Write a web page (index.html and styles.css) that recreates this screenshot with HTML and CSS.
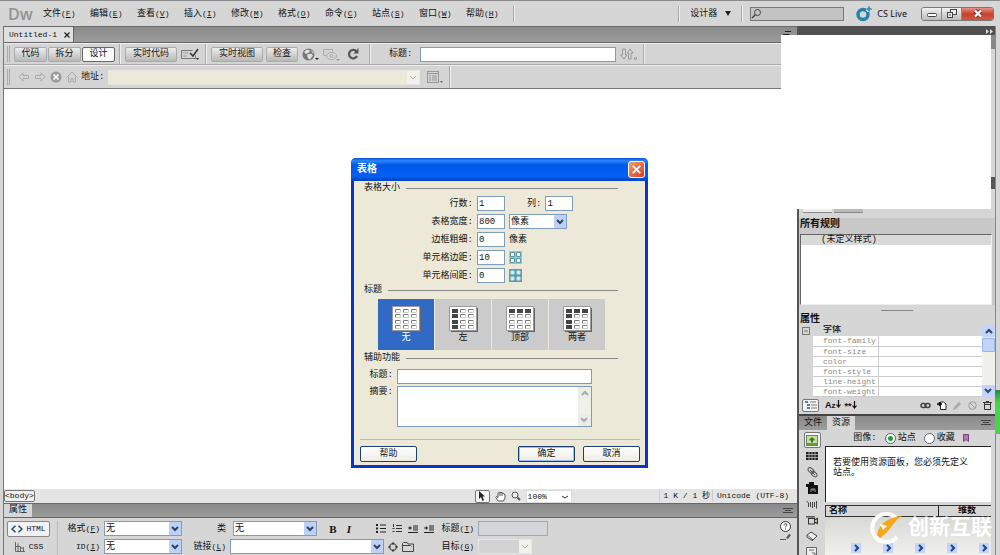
FILE: index.html
```html
<!DOCTYPE html>
<html lang="zh-CN">
<head>
  <meta charset="UTF-8">
  <meta name="viewport" content="width=device-width, initial-scale=1.0">
  <title>Untitled-1</title>
  <link rel="stylesheet" href="styles.css">
</head>

<body>
<header class="app-bar">
  <div class="logo">Dw</div>
  <nav class="menu">
    <a href="#">文件<span class="key">(<u>F</u>)</span></a>
    <a href="#">编辑<span class="key">(<u>E</u>)</span></a>
    <a href="#">查看<span class="key">(<u>V</u>)</span></a>
    <a href="#">插入<span class="key">(<u>I</u>)</span></a>
    <a href="#">修改<span class="key">(<u>M</u>)</span></a>
    <a href="#">格式<span class="key">(<u>O</u>)</span></a>
    <a href="#">命令<span class="key">(<u>C</u>)</span></a>
    <a href="#">站点<span class="key">(<u>S</u>)</span></a>
    <a href="#">窗口<span class="key">(<u>W</u>)</span></a>
    <a href="#">帮助<span class="key">(<u>H</u>)</span></a>
  </nav>
  <i class="sep menu-end"></i>
  <div class="app-right">
    <i class="sep"></i>
    <button class="workspace">设计器 <svg width="6" height="5" viewBox="0 0 6 5"><path d="M0 0h6L3 5z" fill="#222"/></svg></button>
    <i class="sep"></i>
    <label class="search">
      <svg width="11" height="11" viewBox="0 0 11 11" fill="none" stroke="#444"><circle cx="6.5" cy="4.5" r="3"/><path d="M4.3 6.8L1 10" stroke-width="1.5"/></svg>
      <input type="text" aria-label="搜索">
    </label>
    <button class="cs-live"><svg width="16" height="16" viewBox="0 0 16 16"><circle cx="7" cy="8.500" r="5" fill="none" stroke="#2583a8" stroke-width="3.500"/><path d="M13 0v6M10 3h6" stroke="#d6d6d6" stroke-width="4"/><path d="M13 .5v5M10.500 3h5" stroke="#3b94b8" stroke-width="1.800"/></svg>CS Live</button>
    <div class="win-buttons">
      <button aria-label="最小化"><svg width="10" height="8" viewBox="0 0 10 8"><rect x=".5" y="3.500" width="9" height="3" rx="1" fill="#fff" stroke="#444"/></svg></button>
      <button aria-label="还原"><svg width="10" height="9" viewBox="0 0 10 9" fill="#eee" stroke="#444"><rect x="3.500" y=".5" width="6" height="5"/><rect x=".5" y="3.500" width="5" height="5"/><path d="M2 6h2"/></svg></button>
      <button class="win-close" aria-label="关闭"><svg width="10" height="9" viewBox="0 0 10 9"><path d="M2 1.500l6 6M8 1.500l-6 6" stroke="#733" stroke-width="4"/><path d="M2 1.500l6 6M8 1.500l-6 6" stroke="#fff" stroke-width="2.200"/></svg></button>
    </div>
  </div>
</header>

<main class="workspace-row">
  <section class="document">
    <div class="doc-tabs">
      <div class="doc-tab"><span class="en">Untitled-1</span>
        <button aria-label="关闭文档"><svg width="6" height="6" viewBox="0 0 6 6"><path d="M.5.5l5 5M5.500.5l-5 5" stroke="#222" stroke-width="1.200"/></svg></button>
      </div>
      <svg class="restore" width="8" height="6" viewBox="0 0 8 6" fill="#bbb" stroke="#222"><path d="M2 .5h6M0 3.500h6v2H0z"/></svg>
    </div>

    <div class="toolbar">
      <i class="grip"></i>
      <div class="view-modes">
        <button class="tool">代码</button>
        <button class="tool">拆分</button>
        <button class="tool active">设计</button>
      </div>
      <i class="sep"></i>
      <button class="tool">实时代码</button>
      <button class="icon" aria-label="检查浏览器"><svg width="18" height="12" viewBox="0 0 18 12" fill="none" stroke="#555"><path d="M.5 2.500h11M.5 2.500v8h14v-3" stroke="#777"/><path d="M2 5h5M2 8h4" stroke="#999"/><path d="M9 5l3 3 5-7" stroke="#333" stroke-width="1.500"/><path d="M15 10h3l-1.500 2z" fill="#222" stroke="none"/></svg></button>
      <i class="sep"></i>
      <button class="tool">实时视图</button>
      <button class="tool inspect">检查</button>
      <button class="icon" aria-label="预览"><svg width="17" height="13" viewBox="0 0 17 13"><circle cx="6.500" cy="6.500" r="6" fill="#777"/><path d="M2 4l3-2.500 3 1-1 2-3 1.500zM5 6.500l4-1 2 2-3 4-2-1z" fill="#ddd"/><path d="M9 2l2 1 1 3-2-1z" fill="#bbb"/><path d="M13 10h4l-2 2z" fill="#222"/></svg></button>
      <button class="icon" aria-label="可视化助理" disabled><svg width="17" height="13" viewBox="0 0 17 13" fill="none" stroke="#aaa"><path d="M.5 1.500h9v2M.5 1.500v6h3"/><ellipse cx="8.500" cy="8" rx="5" ry="3.500"/><circle cx="8.500" cy="8" r="1.500"/><path d="M13 11h4l-2 2z" fill="#999" stroke="none"/></svg></button>
      <button class="icon refresh" aria-label="刷新"><svg width="12" height="12" viewBox="0 0 12 12"><path d="M9.500 3.500A4.200 4.200 0 1 0 10 8" fill="none" stroke="#555" stroke-width="2.200"/><path d="M11.500 0v5.500H6.500z" fill="#555"/></svg></button>
      <i class="sep"></i>
      <label class="doc-title">标题:<input type="text"></label>
      <button class="icon" aria-label="文件管理" disabled><svg width="17" height="12" viewBox="0 0 17 12" fill="none" stroke="#999"><path d="M2.500 1v6H.5L4 11l3-4H5.500V1zM8.500 11V5H7l3-4 3 4h-2v6zM14 10h3l-1.500 2z"/></svg></button>
      <i class="sep"></i>
    </div>

    <div class="toolbar address">
      <i class="grip"></i>
      <button class="icon" aria-label="后退" disabled><svg width="12" height="10" viewBox="0 0 12 10" fill="none" stroke="#aaa"><path d="M5 .8L.8 5 5 9.200V6.500h5.500v-3H5z"/></svg></button>
      <button class="icon" aria-label="前进" disabled><svg width="12" height="10" viewBox="0 0 12 10" fill="none" stroke="#aaa"><path d="M7 .8L11.200 5 7 9.200V6.500H1.500v-3H7z"/></svg></button>
      <button class="icon" aria-label="停止" disabled><svg width="12" height="12" viewBox="0 0 12 12"><circle cx="6" cy="6" r="5.500" fill="#999"/><path d="M3.500 3.500l5 5M8.500 3.500l-5 5" stroke="#eee" stroke-width="1.800"/></svg></button>
      <button class="icon" aria-label="主页" disabled><svg width="12" height="12" viewBox="0 0 12 12" fill="none" stroke="#aaa"><path d="M.8 6.500L6 1l5.200 5.500M2.500 5.500v5.500h2.500V7.500h2V11h2.500V5.500"/></svg></button>
      <label for="address">地址:</label>
      <select id="address" class="off" disabled><option></option></select>
      <button class="icon" aria-label="选项" disabled><svg width="16" height="13" viewBox="0 0 16 13" fill="none" stroke="#999"><rect x=".5" y=".5" width="11" height="11"/><path d="M.5 2.500h11M2 5h2M2 7h2M2 9h2M5 5h5M5 7h5M5 9h5"/><path d="M13 10h3l-1.500 2z" fill="#666" stroke="none"/></svg></button>
      <i class="sep"></i>
    </div>

    <div class="canvas"></div>

    <div class="status-bar">
      <button class="tag en">&lt;body&gt;</button>
      <div class="status-tools">
        <button class="icon picked" aria-label="选取"><svg width="8" height="10" viewBox="0 0 8 10"><path d="M1 0v8l2-2 1.500 4 1.500-.7L4.500 5.500H7z" fill="#222"/></svg></button>
        <button class="icon" aria-label="手形"><svg width="11" height="11" viewBox="0 0 11 11" fill="#fff" stroke="#555"><path d="M3 10L.8 6.500l.7-1L3 6.500V2l1-.5L5 2l1-1 1 1 1 0 .5 1 1.500.5V7L8.500 10z"/><path d="M5 2v3M7 2v3"/></svg></button>
        <button class="icon" aria-label="缩放"><svg width="10" height="10" viewBox="0 0 10 10" fill="#eee" stroke="#555"><circle cx="4" cy="4" r="3"/><path d="M6.500 6.500L9 9" stroke-width="2"/></svg></button>
        <select class="zoom" aria-label="缩放比率"><option>100%</option></select>
      </div>
      <div class="status-info en"><span>1 K / 1 秒</span><span>Unicode (UTF-8)</span></div>
    </div>

    <section class="properties">
      <div class="prop-tabs"><span class="panel-tab">属性</span>
        <button class="panel-menu" aria-label="面板菜单"></button>
      </div>
      <div class="prop-body">
        <div class="prop-mode">
          <button class="mode on en"><svg width="12" height="8" viewBox="0 0 12 8" fill="none" stroke="#246" stroke-width="1.500"><path d="M4.500.8L1 4l3.500 3.200M7.500.8L11 4 7.500 7.200"/></svg>HTML</button>
          <button class="mode en"><svg width="12" height="10" viewBox="0 0 12 10" fill="none" stroke="#666"><path d="M1.500 0v9.500H11M1.500 4.500h5v5M4 1.500v8M9.500 5.500v4M6.500 6h3"/></svg>CSS</button>
        </div>
        <div class="prop-grid">
          <label for="format">格式<span class="key">(<u>F</u>)</span></label>
          <select id="format"><option>无</option></select>
          <label for="class">类</label>
          <div class="cell">
            <select id="class" class="class-select"><option>无</option></select>
            <button class="icon bold">B</button>
            <button class="icon italic">I</button>
            <div class="list-buttons">
              <button class="icon" aria-label="项目列表"><svg width="10" height="9" viewBox="0 0 10 9" stroke="#222"><path d="M0 1h2M0 4.500h2M0 8h2" stroke-width="2"/><path d="M4 1h6M4 4.500h6M4 8h6"/></svg></button>
              <button class="icon" aria-label="编号列表"><svg width="10" height="9" viewBox="0 0 10 9" stroke="#333"><path d="M1.500 0v3M.5 4.500h2M.5 7.500h2M4 1.500h6M4 4.500h6M4 7.500h6"/></svg></button>
              <button class="icon" aria-label="缩出"><svg width="10" height="8" viewBox="0 0 10 8" stroke="#222"><path d="M0 7.500h10M5 1h5M5 3h5M5 5h5M1 3h3"/><path d="M0 3l2.500-2v4z" fill="#222" stroke="none"/></svg></button>
              <button class="icon" aria-label="缩进"><svg width="10" height="8" viewBox="0 0 10 8" stroke="#222"><path d="M0 7.500h10M5 1h5M5 3h5M5 5h5M0 3h3"/><path d="M4 3L2 1v4z" fill="#222" stroke="none"/></svg></button>
            </div>
          </div>
          <label for="link-title">标题<span class="key">(<u>T</u>)</span></label>
          <input id="link-title" type="text" disabled>

          <label for="ident"><span class="key">ID(<u>I</u>)</span></label>
          <select id="ident"><option>无</option></select>
          <label for="link">链接<span class="key">(<u>L</u>)</span></label>
          <div class="cell">
            <select id="link" class="link-select"><option></option></select>
            <button class="icon" aria-label="指向文件"><svg width="10" height="10" viewBox="0 0 10 10" fill="none" stroke="#333"><circle cx="5" cy="5" r="3.500"/><path d="M5 0v3M5 7v3M0 5h3M7 5h3"/></svg></button>
            <button class="icon" aria-label="浏览文件"><svg width="12" height="10" viewBox="0 0 12 10" fill="none" stroke="#444"><path d="M.5 9.500v-8l1-1H5l1 1.500h5.500v7.500zM.5 3.500h8l1 1"/></svg></button>
          </div>
          <label for="target">目标<span class="key">(<u>G</u>)</span></label>
          <select id="target" class="off target-select" disabled><option></option></select>
        </div>
        <div class="prop-help">
          <button class="icon" aria-label="帮助"><svg width="11" height="11" viewBox="0 0 11 11" fill="#fff" stroke="#333"><circle cx="5.500" cy="5.500" r="5"/><path d="M4 4.300c0-2 3-2 3-.3 0 1-1.500 1-1.500 2.300M5.500 7.500v1"/></svg></button>
          <button class="icon" aria-label="快速标签编辑器"><svg width="11" height="6" viewBox="0 0 11 6"><path d="M0 5.500h6" stroke="#555"/><path d="M6 4l3-4 2 1-3 4z" fill="#555"/></svg></button>
        </div>
      </div>
    </section>
  </section>

  <aside class="dock">
    <div class="dock-top"><svg width="7" height="5" viewBox="0 0 7 5" fill="#ddd"><path d="M0 0l3 2.500L0 5zM4 0l3 2.500L4 5z"/></svg></div>
    <div class="dock-scroll"></div>
    <div class="css-modes"><i></i><i></i></div>
    <section class="rules">
      <h2>所有规则</h2>
      <div class="rule-list"><p>(未定义样式)</p></div>
    </section>
    <div class="splitter"></div>
    <section class="css-props">
      <h2>属性</h2>
      <div class="css-box">
        <table>
          <colgroup><col class="col-twisty"><col class="col-name"><col></colgroup>
          <thead><tr><th class="twisty"><svg width="8" height="8" viewBox="0 0 8 8" fill="none" stroke="#777"><rect x=".5" y=".5" width="7" height="7"/><path d="M2 4h4"/></svg></th><th colspan="2">字体</th></tr></thead>
          <tbody>
            <tr><td></td><td>font-family</td><td></td></tr>
            <tr><td></td><td>font-size</td><td></td></tr>
            <tr><td></td><td>color</td><td></td></tr>
            <tr><td></td><td>font-style</td><td></td></tr>
            <tr><td></td><td>line-height</td><td></td></tr>
            <tr><td></td><td>font-weight</td><td></td></tr>
          </tbody>
        </table>
        <div class="scrollbar"><i class="up"></i><i class="thumb"></i><i class="down"></i></div>
      </div>
      <div class="css-tools">
        <button class="icon picked" aria-label="类别视图"><svg width="12" height="9" viewBox="0 0 12 9"><path d="M0 1h3M2 4h3M2 7h3" stroke="#357" stroke-width="1.500"/><path d="M5 1h6M6 4h6M6 7h6" stroke="#777"/></svg></button>
        <button class="icon az">A<small>z</small><svg width="5" height="8" viewBox="0 0 5 8"><path d="M2.500 0v6M.5 4.500l2 2.500 2-2.500" fill="none" stroke="#111" stroke-width="1.200"/></svg></button>
        <button class="icon az">**<svg width="5" height="8" viewBox="0 0 5 8"><path d="M2.500 0v6M.5 4.500l2 2.500 2-2.500" fill="none" stroke="#111" stroke-width="1.200"/></svg></button>
        <span class="push"></span>
        <button class="icon" aria-label="附加样式表"><svg width="11" height="7" viewBox="0 0 11 7" fill="none" stroke="#444" stroke-width="1.500"><rect x="1" y="1.500" width="5" height="4" rx="2"/><rect x="5" y="1.500" width="5" height="4" rx="2"/></svg></button>
        <button class="icon" aria-label="新建规则"><svg width="10" height="9" viewBox="0 0 10 9"><path d="M3.500 1h3L9 3v5.500H3.500z" fill="#fff" stroke="#222"/><path d="M0 3h5M2.500 1v4" stroke="#111" stroke-width="1.500"/></svg></button>
        <button class="icon" aria-label="编辑规则" disabled><svg width="9" height="9" viewBox="0 0 9 9"><path d="M0 9l1-3 5-5 2 2-5 5z" fill="#aaa"/></svg></button>
        <button class="icon" aria-label="禁用" disabled><svg width="9" height="9" viewBox="0 0 9 9" fill="none" stroke="#999"><circle cx="4.500" cy="4.500" r="3.800"/><path d="M2 2l5 5"/></svg></button>
        <button class="icon" aria-label="删除"><svg width="9" height="9" viewBox="0 0 9 9" fill="none" stroke="#333"><path d="M0 1.500h9M3 .5h3M1.500 2v6.500h6V2M1.500 3.500h6"/></svg></button>
      </div>
    </section>

    <section class="assets">
      <div class="asset-tabs"><span>文件</span><span class="panel-tab">资源</span>
        <button class="panel-menu" aria-label="面板菜单"></button>
      </div>
      <div class="asset-body">
        <div class="asset-kinds">
          <button class="icon picked" aria-label="图像"><svg width="12" height="11" viewBox="0 0 12 11"><rect x=".5" y=".5" width="11" height="10" fill="#c5dfa0" stroke="#686"/><path d="M1 8h10v2H1z" fill="#6a9a3c"/><path d="M6 2.500v5M3.500 4.500h5" stroke="#3c7a1c" stroke-width="2"/></svg></button>
          <button class="icon" aria-label="颜色"><svg width="12" height="8" viewBox="0 0 12 8"><path d="M0 0h12v8H0z" fill="#222"/><path d="M3 0v8M6 0v8M9 0v8M0 2.500h12M0 5.500h12" stroke="#ccc" stroke-width=".7"/></svg></button>
          <button class="icon" aria-label="URL"><svg width="11" height="11" viewBox="0 0 11 11" fill="none" stroke="#555"><ellipse cx="4" cy="3.500" rx="3.500" ry="2" transform="rotate(40 4 3.500)"/><ellipse cx="7" cy="7" rx="3.500" ry="2" transform="rotate(40 7 7)"/><path d="M3 3l5 5"/></svg></button>
          <button class="icon" aria-label="SWF"><svg width="12" height="12" viewBox="0 0 12 12"><path d="M0 2h3V0h5v3h4v9H2V5H0z" fill="#111"/><path d="M5 10V7h4v3M7 7v2" stroke="#999" fill="none"/></svg></button>
          <button class="icon" aria-label="Shockwave"><svg width="12" height="9" viewBox="0 0 12 9" fill="none" stroke="#444"><path d="M.5 1l2 2v4M4.500 2v5M6.500 2v6M8.500 2v5M10.500 1v7.500"/></svg></button>
          <button class="icon" aria-label="影片"><svg width="12" height="9" viewBox="0 0 12 9" fill="none" stroke="#333"><rect x="2.500" y="2.500" width="6" height="5.500"/><path d="M0 .8h9M8.500 4l3-1.500v5l-3-1.500" stroke-width="1.300"/></svg></button>
          <button class="icon" aria-label="脚本"><svg width="12" height="10" viewBox="0 0 12 10" fill="#eee" stroke="#444"><path d="M1 4l4-3 6 4-4 4z"/><path d="M1 4v2l6 4"/></svg></button>
          <button class="icon" aria-label="模板"><svg width="12" height="10" viewBox="0 0 12 10" fill="#eee" stroke="#666"><path d="M.5.5h10v9H.5zM3 3h5M6 6h3v3"/></svg></button>
        </div>
        <div class="asset-main">
          <div class="asset-filter">
            <span>图像:</span>
            <label><input type="radio" name="scope" checked>站点</label>
            <label><input type="radio" name="scope">收藏</label>
            <svg width="6" height="8" viewBox="0 0 6 8"><path d="M.5.5h5v7L3 5.500.5 7.500z" fill="#b7b" stroke="#747"/></svg>
          </div>
          <div class="asset-preview">若要使用资源面板，您必须先定义<br>站点。</div>
          <div class="asset-head"><b>名称</b><b>维数</b></div>
          <div class="asset-list"><i></i><i></i><i></i><i></i><i></i></div>
        </div>
      </div>
    </section>
  </aside>
</main>

<div class="blank-cover"></div>
<div class="green-tab"></div>

<form class="dialog" role="dialog" aria-labelledby="dialog-title">
  <div class="dialog-title"><b id="dialog-title">表格</b>
    <button type="button" aria-label="关闭"><svg width="9" height="9" viewBox="0 0 9 9"><path d="M.8.8l7.400 7.400M8.200.8L.8 8.200" stroke="#fff" stroke-width="1.700"/></svg></button>
  </div>
  <div class="dialog-body">
    <div class="legend">表格大小</div>
    <div class="size-rows">
      <label for="rows">行数:</label>
      <div class="cell"><input id="rows" type="text" value="1"><label class="cols-label" for="cols">列:</label><input id="cols" type="text" value="1"></div>
      <label for="width">表格宽度:</label>
      <div class="cell"><input id="width" type="text" value="800"><select aria-label="宽度单位"><option>像素</option></select></div>
      <label for="border">边框粗细:</label>
      <div class="cell"><input id="border" type="text" value="0">像素</div>
      <label for="padding">单元格边距:</label>
      <div class="cell"><input id="padding" type="text" value="10"><svg width="13" height="13" viewBox="0 0 13 13"><path d="M0 0h13v13H0z" fill="#9cc6ce"/><path d="M1.500 1.500h4v4h-4zM7.500 1.500h4v4h-4zM1.500 7.500h4v4h-4zM7.500 7.500h4v4h-4z" fill="#eef8fa" stroke="#5b9aa9"/></svg></div>
      <label for="spacing">单元格间距:</label>
      <div class="cell"><input id="spacing" type="text" value="0"><svg width="13" height="13" viewBox="0 0 13 13"><path d="M0 0h13v13H0z" fill="#5f9dad"/><path d="M2 2h3v3H2zM8 2h3v3H8zM2 8h3v3H2zM8 8h3v3H8z" fill="#e2f3f6" stroke="#c2e0e6"/></svg></div>
    </div>

    <div class="legend">标题</div>
    <div class="headers">
      <button type="button" class="on"><svg width="29" height="26" viewBox="0 0 29 26"><use href="#grid"/></svg>无</button>
      <button type="button"><svg width="29" height="26" viewBox="0 0 29 26"><use href="#grid"/><use href="#left"/></svg>左</button>
      <button type="button"><svg width="29" height="26" viewBox="0 0 29 26"><use href="#grid"/><use href="#top"/></svg>顶部</button>
      <button type="button"><svg width="29" height="26" viewBox="0 0 29 26"><use href="#grid"/><use href="#left"/><use href="#top"/></svg>两者</button>
    </div>

    <div class="legend">辅助功能</div>
    <div class="access">
      <label for="caption">标题:</label>
      <input id="caption" type="text">
      <label for="summary">摘要:</label>
      <div class="summary"><textarea id="summary"></textarea><div class="scrollbar off"><i class="up"></i><i class="down"></i></div></div>
    </div>

    <div class="dialog-buttons">
      <button type="button">帮助</button>
      <span class="push"></span>
      <button type="submit" class="default">确定</button>
      <button type="button">取消</button>
    </div>
  </div>
</form>

<div class="watermark">
  <svg width="38" height="34" viewBox="0 0 38 34" fill="none">
    <path d="M30 8A14 14 0 1 0 30 26" stroke="#fff" stroke-width="4"/>
    <path d="M10 24C12 12 22 6 35 5C26 10 24 20 13 27z" fill="#f5a81c"/>
    <path d="M13 13l7 2-4 4z" fill="#fff"/>
  </svg>
  <b>创新互联</b>
</div>

<svg class="defs" width="0" height="0">
  <defs>
    <g id="grid">
      <path d="M2 2h27v24H2z" fill="#666"/>
      <path d="M.5.5h27v24H.5z" fill="#fff" stroke="#999"/>
      <path d="M3.500 6.500v-3h5M11.500 6.500v-3h5M19.500 6.500v-3h5M3.500 11.500v-3h5M11.500 11.500v-3h5M19.500 11.500v-3h5M3.500 17.500v-3h5M11.500 17.500v-3h5M19.500 17.500v-3h5M3.500 22.500v-3h5M11.500 22.500v-3h5M19.500 22.500v-3h5" fill="none" stroke="#777"/>
      <path d="M3.500 6.500h5v-3M11.500 6.500h5v-3M19.500 6.500h5v-3M3.500 11.500h5v-3M11.500 11.500h5v-3M19.500 11.500h5v-3M3.500 17.500h5v-3M11.500 17.500h5v-3M19.500 17.500h5v-3M3.500 22.500h5v-3M11.500 22.500h5v-3M19.500 22.500h5v-3" fill="none" stroke="#ccc"/>
    </g>
    <path id="left" d="M3 3h6v4H3zM3 8h6v4H3zM3 14h6v4H3zM3 19h6v4H3z" fill="#444"/>
    <path id="top" d="M3 3h6v4H3zM11 3h6v4h-6zM19 3h6v4h-6z" fill="#444"/>
  </defs>
</svg>
</body>
</html>
```

FILE: styles.css
```css
* {
    box-sizing: border-box;
    margin: 0;
    padding: 0;
}

body {
    display: flex;
    flex-direction: column;
    height: 100vh;
    overflow: hidden;
    background: #d6d6d6;
    border-top: 1px solid #8a8a8a;
    color: #111;
    font-family: "Liberation Mono", "Noto Sans CJK SC", monospace;
    font-size: 9px;
    line-height: 12px;
}

button, input, select, textarea {
    font: inherit;
    color: inherit;
}

button {
    display: inline-flex;
    align-items: center;
    justify-content: center;
    border: 0;
    background: none;
    white-space: nowrap;
}

a {
    color: inherit;
    text-decoration: none;
}

svg {
    display: block;
    flex: none;
}

label {
    white-space: nowrap;
}

input[type=text], select, textarea {
    min-width: 0;
    height: 15px;
    border: 1px solid #7f9db9;
    border-radius: 0;
    background: #fff;
    outline: none;
}

select {
    appearance: none;
    padding: 0 14px 0 1px;
    background: #fff url("data:image/svg+xml,%3Csvg xmlns='http://www.w3.org/2000/svg' width='12' height='13'%3E%3Crect width='12' height='13' rx='1' fill='%23bdd0f8'/%3E%3Cpath d='M3 5l3 3 3-3' fill='none' stroke='%23345' stroke-width='2'/%3E%3C/svg%3E") no-repeat right center;
}

select.off {
    border-color: #e8e8e2;
    background: #ece9d8 url("data:image/svg+xml,%3Csvg xmlns='http://www.w3.org/2000/svg' width='12' height='13'%3E%3Crect width='12' height='13' fill='%23f2f1ea'/%3E%3Cpath d='M3 5l3 3 3-3' fill='none' stroke='%23aaa'/%3E%3C/svg%3E") no-repeat right center;
    opacity: 1;
}

.key, .en {
    font-size: 8px;
}

.cell {
    display: flex;
    align-items: center;
}

.push {
    flex: 1;
}

.sep {
    flex: none;
    width: 2px;
    align-self: stretch;
    border-left: 1px solid #aaa;
    border-right: 1px solid #eee;
}

.picked {
    border: 1px solid #777;
    border-radius: 2px;
    background: #f4f4f4;
}

/* application bar */
.app-bar {
    display: flex;
    align-items: center;
    height: 25px;
    padding: 0 6px 0 8px;
}

.app-bar .sep {
    height: 16px;
    align-self: center;
}

.logo {
    width: 35px;
    color: #929292;
    font: 600 16px/24px "Open Sans", sans-serif;
}

.menu {
    display: flex;
}

.menu a {
    width: 47px;
    white-space: nowrap;
}

.app-bar .menu-end {
    margin-right: 4px;
}

.app-right {
    display: flex;
    align-items: center;
    gap: 7px;
    margin-left: auto;
}

.workspace {
    gap: 8px;
    padding: 0 3px;
}

.search {
    display: flex;
    align-items: center;
    width: 94px;
    height: 14px;
    border: 1px solid #777;
    background: #c3c3c3;
}

.search input[type=text] {
    width: 80px;
    height: 12px;
    border: 0;
    background: none;
}

.cs-live {
    gap: 5px;
    margin: 0 7px 0 5px;
    font: 9px/12px "Noto Sans", sans-serif;
}

.win-buttons {
    display: flex;
    border: 1px solid #777;
    border-radius: 3px;
    overflow: hidden;
}

.win-buttons button {
    width: 20px;
    height: 12px;
    border-right: 1px solid #888;
    background: linear-gradient(#f2f2f2, #bcbcbc);
}

.win-buttons .win-close {
    width: 31px;
    border: 0;
    background: linear-gradient(#e79282, #c9402c 50%, #d25843);
}

/* document */
.workspace-row {
    display: flex;
    flex: 1;
    min-height: 0;
}

.document {
    display: flex;
    flex-direction: column;
    flex: 1;
    min-width: 0;
    border-left: 1px solid #777;
    margin-left: 3px;
}

.doc-tabs, .prop-tabs, .asset-tabs {
    display: flex;
    background: linear-gradient(#8a8a8a, #9c9c9c);
    border-top: 1px solid #6a6a6a;
    border-bottom: 1px solid #666;
}

.doc-tabs {
    height: 17px;
    padding-right: 6px;
}

.doc-tab {
    display: flex;
    align-items: center;
    gap: 7px;
    width: 70px;
    padding-left: 5px;
    background: #e0e0e0;
    border-right: 1px solid #666;
}

.restore {
    margin: 4px 0 0 auto;
}

.toolbar {
    display: flex;
    align-items: center;
    height: 22px;
    padding-left: 3px;
    border-top: 1px solid #eee;
    border-bottom: 1px solid #aaa;
    background: #d4d4d4;
}

.toolbar .icon {
    margin-left: 4px;
}

.toolbar .refresh {
    margin: 0 4px 0 7px;
}

.grip {
    width: 3px;
    height: 16px;
    border: 1px solid #aaa;
    border-width: 0 1px;
    margin-right: 4px;
}

.tool {
    height: 15px;
    padding: 0 6px;
    border: 1px solid #aaa;
    border-radius: 2px;
    background: linear-gradient(#ececec, #b8b8b8);
}

.view-modes {
    display: flex;
    gap: 1px;
    margin-right: 4px;
}

.view-modes .tool {
    width: 33px;
}

.tool.active {
    border-color: #666;
    background: #fafafa;
}

.toolbar > .sep + .tool {
    width: 52px;
    margin-left: 4px;
}

.toolbar .icon + .sep {
    margin-left: 6px;
}

.inspect {
    width: 32px;
    margin-left: 3px;
}

.doc-title {
    display: flex;
    align-items: center;
    gap: 8px;
    margin-left: 18px;
}

.doc-title input[type=text] {
    width: 196px;
}

.address {
    height: 24px;
    border-bottom: 1px solid #777;
}

.address label {
    margin-left: 3px;
}

.address select {
    width: 312px;
    margin: 0 3px 0 4px;
}

.canvas {
    flex: 1;
    background: #fff;
}

.status-bar {
    display: flex;
    align-items: center;
    height: 14px;
    background: #e4e4e4;
}

.tag {
    height: 12px;
    border: 1px solid #777;
    border-radius: 2px;
    background: #eee;
}

.status-tools {
    display: flex;
    align-items: center;
    gap: 5px;
    margin-left: auto;
}

.status-tools .picked {
    width: 15px;
    height: 13px;
}

.status-tools select.zoom {
    width: 46px;
    height: 13px;
    border-color: #ddd;
    background: #fff url("data:image/svg+xml,%3Csvg xmlns='http://www.w3.org/2000/svg' width='12' height='13'%3E%3Cpath d='M3 6l3 2 3-2' fill='none' stroke='%23333'/%3E%3C/svg%3E") no-repeat right center;
    font-size: 8px;
}

.status-info {
    display: flex;
    margin-left: 87px;
    padding-right: 6px;
}

.status-info span {
    padding: 0 2px 0 4px;
    border-left: 1px solid #ccc;
    white-space: nowrap;
}

/* property inspector */
.prop-tabs {
    height: 15px;
}

.panel-tab {
    padding: 0 5px;
    background: #d6d6d6;
}

.panel-menu {
    width: 10px;
    height: 5px;
    margin: 4px 4px 0 auto;
    border-top: 1px solid #444;
    border-bottom: 1px solid #444;
    background: linear-gradient(#444, #444) no-repeat center / 6px 1px;
}

.prop-body {
    display: flex;
    align-items: flex-start;
    height: 37px;
    padding: 3px 6px 0 3px;
}

.prop-mode {
    display: flex;
    flex-direction: column;
    gap: 2px;
    padding-right: 7px;
    border-right: 1px solid #bbb;
}

.mode {
    gap: 3px;
    width: 43px;
    height: 16px;
    border: 1px solid transparent;
}

.mode.on {
    border-color: #888;
    border-radius: 2px;
    background: #f2f2f2;
}

.prop-grid {
    display: grid;
    grid-template-columns: 42px 78px 40px 206px 34px 70px;
    grid-auto-rows: 15px;
    align-items: center;
    gap: 3px 4px;
}

.prop-grid label {
    text-align: right;
}

.prop-grid .class-select {
    width: 84px;
    margin-left: 3px;
}

.prop-grid .link-select {
    width: 154px;
}

.prop-grid .link-select ~ .icon {
    margin-left: 4px;
}

.prop-grid input:disabled {
    background: #d3d6da;
    border-color: #9aa9b8;
}

.prop-grid .target-select {
    width: 54px;
    background-color: #d3d3d3;
}

.bold, .italic {
    width: 16px;
    font: bold 11px/12px "Liberation Serif", serif;
}

.bold {
    margin-left: 8px;
}

.italic {
    font-style: italic;
}

.list-buttons {
    display: flex;
    gap: 6px;
    margin-left: auto;
    padding-right: 2px;
}

.prop-help {
    display: flex;
    flex-direction: column;
    gap: 2px;
    margin-left: auto;
}

/* right dock */
.dock {
    display: flex;
    flex-direction: column;
    width: 203px;
    padding-right: 4px;
    border-left: 2px solid #555;
    background: #d6d6d6;
}

.dock > * {
    border-right: 1px solid #888;
}

.dock-top {
    display: flex;
    justify-content: flex-end;
    height: 9px;
    padding: 3px 2px 0 0;
    background: #505050;
}

.dock-scroll {
    height: 174px;
    background: linear-gradient(#888, #888) no-repeat right top / 4px 14px, linear-gradient(#555, #555) no-repeat right 142px / 4px 12px;
}

.css-modes {
    display: flex;
    gap: 2px;
    height: 9px;
    padding: 0 0 5px 4px;
}

.css-modes i {
    width: 29px;
    border-bottom: 1px solid #888;
    background: #eee;
}

.css-modes i + i {
    background: #bbb;
}

h2 {
    padding-left: 1px;
    font-size: 10px;
    line-height: 14px;
}

.rules {
    padding-right: 3px;
    background: #c8c8c8;
}

.rules h2 {
    height: 16px;
}

.rule-list {
    height: 71px;
    margin-left: 1px;
    border: 1px solid #777;
    border-color: #666 #eee #eee #666;
    background: #fff;
}

.rule-list p {
    height: 10px;
    padding-left: 20px;
    background: #d9d9d9;
    line-height: 10px;
}

.splitter {
    height: 9px;
    background: linear-gradient(#888, #888) no-repeat center 5px / 32px 1px;
}

.css-props h2 {
    height: 11px;
    line-height: 12px;
}

.css-box {
    display: flex;
    height: 72px;
    overflow: hidden;
}

table {
    flex: 1;
    width: 100%;
    border-collapse: collapse;
    table-layout: fixed;
}

.col-twisty {
    width: 14px;
}

.col-name {
    width: 65px;
}

th {
    height: 11px;
    padding-left: 10px;
    color: #333;
    font-weight: bold;
    line-height: 11px;
    text-align: left;
}

th.twisty {
    padding-left: 3px;
}

td {
    height: 10px;
    border-bottom: 1px solid #ccc;
    background: #fff;
    color: #8a8a8a;
    font-size: 8px;
    line-height: 9px;
}

td:first-child {
    border: 0;
    background: none;
}

td:nth-child(2) {
    padding-left: 10px;
    border-right: 1px solid #ccc;
}

.scrollbar {
    display: flex;
    flex-direction: column;
    flex: none;
    width: 13px;
    background: #f1f1ec;
}

.scrollbar i {
    height: 12px;
    border-radius: 1px;
    background: #c3d4fa;
}

.scrollbar .up, .scrollbar .down {
    background: #c3d4fa url("data:image/svg+xml,%3Csvg xmlns='http://www.w3.org/2000/svg' width='8' height='6'%3E%3Cpath d='M1 5l3-3 3 3' fill='none' stroke='%23346' stroke-width='2'/%3E%3C/svg%3E") no-repeat center;
}

.scrollbar .down {
    margin-top: auto;
    transform: rotate(180deg);
}

.scrollbar .thumb {
    height: 14px;
    margin-top: 1px;
    border: 1px solid #9bb4e8;
}

.scrollbar.off .up, .scrollbar.off .down {
    background-color: #e9e9e3;
    opacity: .4;
}

.css-tools {
    display: flex;
    align-items: center;
    gap: 6px;
    height: 17px;
    padding: 0 3px;
}

.css-tools .picked {
    width: 17px;
    height: 13px;
}

.css-tools .az {
    align-items: baseline;
    margin-right: -2px;
    font: bold 9px/12px "Liberation Sans", sans-serif;
}

.az small {
    font-size: 8px;
}

.assets {
    display: flex;
    flex-direction: column;
    flex: 1;
    min-height: 0;
    border-top: 2px solid #444;
}

.asset-tabs {
    height: 14px;
    border: 0;
}

.asset-tabs span {
    padding: 0 5px;
    line-height: 14px;
}

.asset-body {
    display: flex;
    flex: 1;
    min-height: 0;
}

.asset-kinds {
    display: flex;
    flex-direction: column;
    width: 26px;
    align-items: center;
    padding-top: 2px;
}

.asset-kinds .icon {
    flex: none;
    height: 16px;
    width: 17px;
}

.asset-main {
    display: flex;
    flex-direction: column;
    flex: 1;
    padding-right: 4px;
}

.asset-filter {
    display: flex;
    align-items: center;
    justify-content: center;
    gap: 8px;
    height: 16px;
    padding-left: 6px;
}

.asset-filter label {
    display: flex;
    align-items: center;
    gap: 2px;
}

input[type=radio] {
    appearance: none;
    width: 11px;
    height: 11px;
    border: 1px solid #567;
    border-radius: 50%;
    background: #fff;
}

input[type=radio]:checked {
    background: radial-gradient(circle, #2a9a35 2px, #fff 3px);
}

.asset-preview {
    height: 56px;
    padding: 11px 0 0 7px;
    border-top: 1px solid #222;
    border-left: 1px solid #222;
    background: #fff;
    line-height: 10px;
    white-space: nowrap;
}

.asset-head {
    display: flex;
    margin-top: 3px;
    border: 1px solid #333;
    border-width: 1px 0 1px 1px;
    font-size: 9px;
    line-height: 10px;
}

.asset-head b {
    flex: 1;
    padding-left: 3px;
}

.asset-head b + b {
    flex: none;
    width: 53px;
    padding-left: 19px;
    border-left: 1px solid #222;
}

.asset-list {
    display: flex;
    align-items: flex-end;
    justify-content: space-between;
    flex: 1;
    padding: 0 2px 2px 26px;
    border-radius: 10px 0 0 0;
    background: linear-gradient(#d8d8d6, #f0f0ec);
}

.asset-list i {
    width: 10px;
    height: 10px;
    background: #c3d4fa url("data:image/svg+xml,%3Csvg xmlns='http://www.w3.org/2000/svg' width='8' height='8'%3E%3Cpath d='M3 1l3 3-3 3' fill='none' stroke='%23247' stroke-width='2'/%3E%3C/svg%3E") no-repeat center;
}

/* floating pieces */
.blank-cover {
    position: absolute;
    top: 35px;
    right: 9px;
    width: 210px;
    height: 174px;
    background: #fff;
}

.green-tab {
    position: absolute;
    top: 390px;
    right: 0;
    width: 5px;
    height: 44px;
    background: linear-gradient(#2c8a38, #46d552 30%, #46d552);
}

.dialog {
    position: absolute;
    top: 158px;
    left: 50%;
    width: 297px;
    margin-left: -149px;
    border: 3px solid #0a35c8;
    border-top: 0;
    border-radius: 5px 5px 0 0;
    background: #ece9d8;
}

.dialog-title {
    display: flex;
    align-items: center;
    justify-content: space-between;
    height: 23px;
    margin: 0 -3px;
    padding: 0 3px 0 6px;
    border-radius: 5px 5px 0 0;
    background: linear-gradient(#0a4fd8, #2a86ff 12%, #0058e8 30%, #0560f5 80%, #0340b8);
    color: #fff;
    font-size: 10px;
}

.dialog-title button {
    width: 17px;
    height: 17px;
    border: 1px solid #fff;
    border-radius: 3px;
    background: linear-gradient(135deg, #f09a78, #d8401a);
}

.dialog-body {
    padding: 1px 5px 3px 6px;
}

.legend {
    display: flex;
    align-items: center;
    gap: 6px;
    margin: 0 22px 0 4px;
}

.legend::after {
    content: "";
    flex: 1;
    border-top: 1px solid #888;
}

.size-rows {
    display: grid;
    grid-template-columns: 113px 1fr;
    grid-auto-rows: 15px;
    align-items: center;
    gap: 3px 4px;
    padding: 2px 0 1px;
}

.size-rows > label, .access label {
    text-align: right;
}

.size-rows .cell {
    gap: 4px;
}

.size-rows input[type=text] {
    width: 28px;
    padding-left: 1px;
}

.size-rows select {
    width: 58px;
}

.cols-label {
    margin-left: 18px;
}

.headers {
    display: flex;
    gap: 1px;
    margin: 3px 0 2px 18px;
}

.headers button {
    flex-direction: column;
    width: 56px;
    height: 51px;
    background: #cbcbcb;
}

.headers .on {
    background: #316ac5;
    color: #fff;
}

.access {
    display: grid;
    grid-template-columns: 33px 195px;
    gap: 2px 4px;
    padding-top: 5px;
}

.summary {
    display: flex;
    height: 41px;
    border: 1px solid #7f9db9;
    background: #fff;
}

.summary textarea {
    flex: 1;
    height: 100%;
    border: 0;
    resize: none;
}

.dialog-buttons {
    display: flex;
    gap: 8px;
    margin-top: 12px;
    padding-top: 6px;
    border-top: 1px solid #bcb9a8;
}

.dialog-buttons button {
    width: 57px;
    height: 16px;
    border: 1px solid #1b3f70;
    border-radius: 2px;
    background: linear-gradient(#fff, #ecebe4);
}

.dialog-buttons .default {
    box-shadow: inset 0 0 0 1px #9dbcf0;
}

.watermark {
    position: absolute;
    right: 8px;
    bottom: 10px;
    display: flex;
    align-items: center;
    gap: 3px;
    color: #fff;
    font-size: 21px;
    line-height: 21px;
}

.defs {
    position: absolute;
}
```
